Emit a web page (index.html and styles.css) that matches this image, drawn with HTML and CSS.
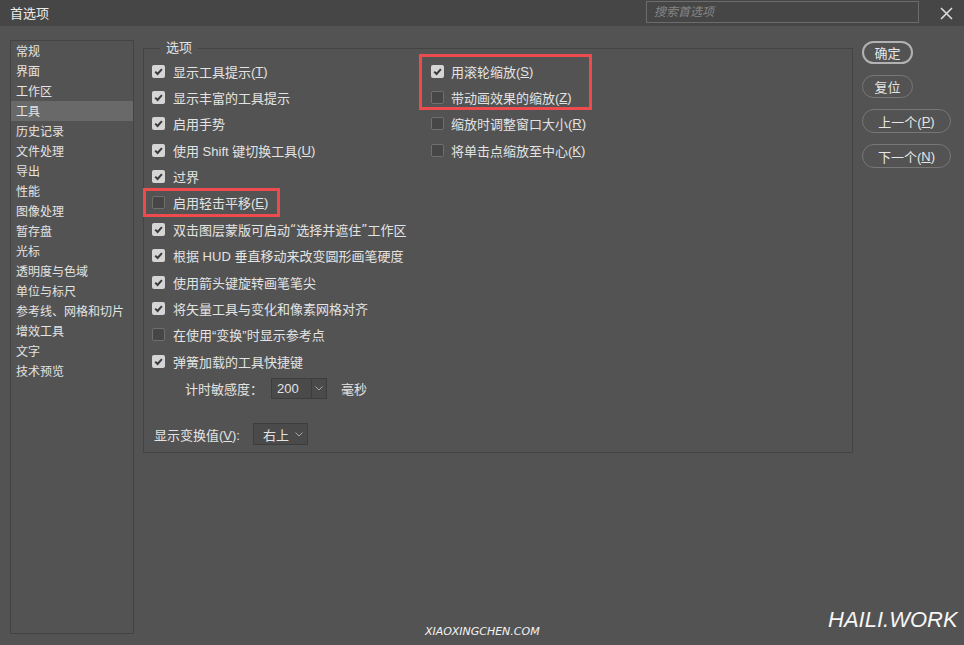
FILE: index.html
```html
<!DOCTYPE html>
<html lang="zh-CN">
<head>
<meta charset="utf-8">
<title>首选项</title>
<link rel="stylesheet" href="styles.css">
</head>
<body>
<div class="titlebar">
  <div class="title">首选项</div>
  <div class="search">搜索首选项</div>
  <div class="close"><svg width="13" height="13" viewBox="0 0 13 13"><path d="M1 1 L12 12 M12 1 L1 12" stroke="#dcdcdc" stroke-width="1.6" fill="none"/></svg></div>
</div>
<div class="main">
  <div class="nav">
    <div class="nav-item">常规</div>
    <div class="nav-item">界面</div>
    <div class="nav-item">工作区</div>
    <div class="nav-item active">工具</div>
    <div class="nav-item">历史记录</div>
    <div class="nav-item">文件处理</div>
    <div class="nav-item">导出</div>
    <div class="nav-item">性能</div>
    <div class="nav-item">图像处理</div>
    <div class="nav-item">暂存盘</div>
    <div class="nav-item">光标</div>
    <div class="nav-item">透明度与色域</div>
    <div class="nav-item">单位与标尺</div>
    <div class="nav-item">参考线、网格和切片</div>
    <div class="nav-item">增效工具</div>
    <div class="nav-item">文字</div>
    <div class="nav-item">技术预览</div>
  </div>
  <div class="group">
    <div class="legend">选项</div>
    <div class="cols">
      <div class="col">
        <div class="row"><span class="cb on"><svg width="13" height="13" viewBox="0 0 13 13"><path d="M3.2 6.6 L5.6 9 L9.9 4.2" stroke="#3a3a3a" stroke-width="2" fill="none"/></svg></span>显示工具提示(<u>T</u>)</div>
        <div class="row"><span class="cb on"><svg width="13" height="13" viewBox="0 0 13 13"><path d="M3.2 6.6 L5.6 9 L9.9 4.2" stroke="#3a3a3a" stroke-width="2" fill="none"/></svg></span>显示丰富的工具提示</div>
        <div class="row"><span class="cb on"><svg width="13" height="13" viewBox="0 0 13 13"><path d="M3.2 6.6 L5.6 9 L9.9 4.2" stroke="#3a3a3a" stroke-width="2" fill="none"/></svg></span>启用手势</div>
        <div class="row"><span class="cb on"><svg width="13" height="13" viewBox="0 0 13 13"><path d="M3.2 6.6 L5.6 9 L9.9 4.2" stroke="#3a3a3a" stroke-width="2" fill="none"/></svg></span>使用 Shift 键切换工具(<u>U</u>)</div>
        <div class="row"><span class="cb on"><svg width="13" height="13" viewBox="0 0 13 13"><path d="M3.2 6.6 L5.6 9 L9.9 4.2" stroke="#3a3a3a" stroke-width="2" fill="none"/></svg></span>过界</div>
        <div class="row"><span class="cb off"></span>启用轻击平移(<u>E</u>)</div>
        <div class="row"><span class="cb on"><svg width="13" height="13" viewBox="0 0 13 13"><path d="M3.2 6.6 L5.6 9 L9.9 4.2" stroke="#3a3a3a" stroke-width="2" fill="none"/></svg></span>双击图层蒙版可启动<span class="q">“</span>选择并遮住<span class="q">”</span>工作区</div>
        <div class="row"><span class="cb on"><svg width="13" height="13" viewBox="0 0 13 13"><path d="M3.2 6.6 L5.6 9 L9.9 4.2" stroke="#3a3a3a" stroke-width="2" fill="none"/></svg></span>根据 HUD 垂直移动来改变圆形画笔硬度</div>
        <div class="row"><span class="cb on"><svg width="13" height="13" viewBox="0 0 13 13"><path d="M3.2 6.6 L5.6 9 L9.9 4.2" stroke="#3a3a3a" stroke-width="2" fill="none"/></svg></span>使用箭头键旋转画笔笔尖</div>
        <div class="row"><span class="cb on"><svg width="13" height="13" viewBox="0 0 13 13"><path d="M3.2 6.6 L5.6 9 L9.9 4.2" stroke="#3a3a3a" stroke-width="2" fill="none"/></svg></span>将矢量工具与变化和像素网格对齐</div>
        <div class="row"><span class="cb off"></span>在使用“变换”时显示参考点</div>
        <div class="row"><span class="cb on"><svg width="13" height="13" viewBox="0 0 13 13"><path d="M3.2 6.6 L5.6 9 L9.9 4.2" stroke="#3a3a3a" stroke-width="2" fill="none"/></svg></span>弹簧加载的工具快捷键</div>
      </div>
      <div class="col col-right">
        <div class="row"><span class="cb on"><svg width="13" height="13" viewBox="0 0 13 13"><path d="M3.2 6.6 L5.6 9 L9.9 4.2" stroke="#3a3a3a" stroke-width="2" fill="none"/></svg></span>用滚轮缩放(<u>S</u>)</div>
        <div class="row"><span class="cb off"></span>带动画效果的缩放(<u>Z</u>)</div>
        <div class="row"><span class="cb off"></span>缩放时调整窗口大小(<u>R</u>)</div>
        <div class="row"><span class="cb off"></span>将单击点缩放至中心(<u>K</u>)</div>
      </div>
    </div>
    <div class="timer">
      <span>计时敏感度：</span>
      <div class="select sel-timer"><span class="sel-value">200</span><span class="sel-arrow divided"><svg width="8" height="5" viewBox="0 0 8 5"><path d="M0.5 0.5 L4 4 L7.5 0.5" stroke="#a8a8a8" stroke-width="1" fill="none"/></svg></span></div>
      <span class="unit">毫秒</span>
    </div>
    <div class="transform">
      <span>显示变换值(<u>V</u>):</span>
      <div class="select sel-pos"><span class="sel-value">右上</span><span class="sel-arrow"><svg width="8" height="5" viewBox="0 0 8 5"><path d="M0.5 0.5 L4 4 L7.5 0.5" stroke="#a8a8a8" stroke-width="1" fill="none"/></svg></span></div>
    </div>
  </div>
  <div class="buttons">
    <div class="btn sm primary">确定</div>
    <div class="btn sm">复位</div>
    <div class="btn lg">上一个(<u>P</u>)</div>
    <div class="btn lg">下一个(<u>N</u>)</div>
  </div>
</div>
<div class="mark mark-pan"></div>
<div class="mark mark-zoom"></div>
<div class="wm-small">XIAOXINGCHEN.COM</div>
<div class="wm-big">HAILI.WORK</div>
</body>
</html>
```
FILE: styles.css
```css
html, body {
  margin: 0;
  padding: 0;
}
body {
  width: 964px;
  height: 645px;
  overflow: hidden;
  position: relative;
  background: #535353;
  color: #e3e3e3;
  font-family: "Liberation Sans", "Noto Sans CJK SC", sans-serif;
  font-size: 13px;
}
u {
  text-decoration: underline;
  text-underline-offset: 1px;
}

/* title bar */
.titlebar {
  height: 26px;
  background: #464646;
  display: flex;
  align-items: flex-start;
  padding: 0 10px 0 10px;
}
.title {
  flex: 1;
  line-height: 28px;
  color: #ececec;
}
.search {
  width: 273px;
  height: 22px;
  margin-top: 1px;
  box-sizing: border-box;
  border: 1px solid #6c6c6c;
  padding-left: 7px;
  line-height: 20px;
  font-size: 12px;
  font-style: italic;
  color: #858585;
}
.close {
  margin-left: 21px;
  width: 14px;
  height: 26px;
  display: flex;
  align-items: center;
}

/* main */
.main {
  display: flex;
  align-items: flex-start;
  padding: 14px 0 0 10px;
}
.nav {
  width: 124px;
  height: 594px;
  box-sizing: border-box;
  border: 1px solid #434343;
  font-size: 12px;
  color: #e3e3e3;
}
.nav-item {
  height: 20px;
  line-height: 22px;
  padding-left: 5px;
}
.nav-item.active {
  background: #696969;
}

.group {
  position: relative;
  margin: 8px 0 0 9px;
  width: 710px;
  height: 405px;
  box-sizing: border-box;
  border: 1px solid #434343;
  padding: 9px 0 0 8px;
}
.legend {
  position: absolute;
  top: -9px;
  left: 16px;
  padding: 0 6px;
  background: #535353;
  line-height: 16px;
}
.cols {
  display: grid;
  grid-template-columns: 279px 1fr;
}
.row {
  display: flex;
  align-items: center;
  height: 26.36px;
  white-space: nowrap;
}
.q {
  font-family: "DejaVu Sans", sans-serif;
  font-size: 12px;
}
.cb {
  flex: none;
  width: 13px;
  height: 13px;
  box-sizing: border-box;
  border-radius: 2px;
  margin-right: 8px;
  display: flex;
}
.col-right .cb {
  margin-right: 7px;
}
.cb.on {
  background: #d5d5d5;
}
.cb.off {
  background: #464646;
  border: 1px solid #6f6f6f;
}

.timer {
  display: flex;
  align-items: center;
  height: 21px;
  margin-top: 4px;
  padding-left: 33px;
}
.select {
  display: flex;
  align-items: center;
  box-sizing: border-box;
  border: 1px solid #3d3d3d;
  background: #4a4a4a;
}
.sel-timer {
  width: 56px;
  height: 21px;
  margin-left: 8px;
}
.sel-timer .sel-value {
  width: 39px;
  padding-left: 5px;
  box-sizing: border-box;
}
.sel-arrow {
  display: flex;
  align-items: center;
  justify-content: center;
  flex: 1;
  height: 100%;
}
.sel-arrow.divided {
  border-left: 1px solid #3d3d3d;
}
.unit {
  margin-left: 14px;
}

.transform {
  display: flex;
  align-items: center;
  height: 22px;
  margin-top: 24px;
  padding-left: 2px;
}
.sel-pos {
  width: 55px;
  height: 22px;
  margin-left: 13px;
}
.sel-pos .sel-value {
  padding-left: 9px;
  width: 38px;
  box-sizing: border-box;
}

/* buttons */
.buttons {
  display: flex;
  flex-direction: column;
  align-items: flex-start;
  gap: 11px;
  margin: 1px 0 0 9px;
}
.btn {
  height: 23px;
  box-sizing: border-box;
  border: 1px solid #777777;
  border-radius: 12px;
  display: flex;
  align-items: center;
  justify-content: center;
  color: #e6e6e6;
}
.btn.primary {
  border: 2px solid #b2b2b2;
}
.btn.sm {
  width: 51px;
}
.btn.lg {
  width: 89px;
  height: 24px;
}

/* annotation boxes */
.mark {
  position: absolute;
  box-sizing: border-box;
  border: 3px solid #ee4b4f;
}
.mark-pan {
  left: 143px;
  top: 188px;
  width: 137px;
  height: 29px;
}
.mark-zoom {
  left: 419px;
  top: 54px;
  width: 173px;
  height: 56px;
}

/* watermarks */
.wm-small {
  position: absolute;
  left: 425px;
  top: 625px;
  font-family: "DejaVu Sans", sans-serif;
  font-style: italic;
  font-size: 11px;
  color: #f4f4f4;
}
.wm-big {
  position: absolute;
  left: 828px;
  top: 607px;
  font-family: "Liberation Sans", sans-serif;
  font-style: italic;
  font-size: 22px;
  color: #f6f6f6;
}
```
